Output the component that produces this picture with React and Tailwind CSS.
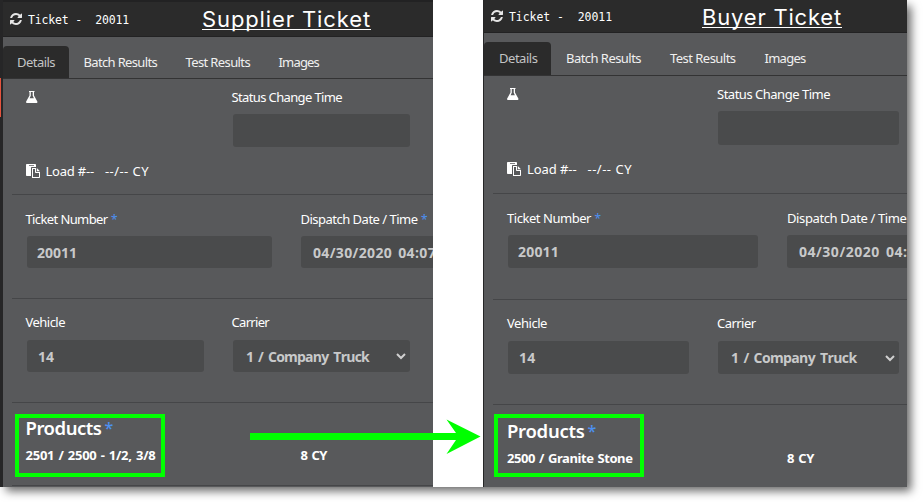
import { useLayoutEffect, useRef } from "react";

// Text tracked so that it fills the given width in pixels.
function Fit({ w, className = "", children }) {
  const ref = useRef(null);
  useLayoutEffect(() => {
    const el = ref.current;
    el.style.letterSpacing = "0px";
    const natural = el.getBoundingClientRect().width;
    el.style.letterSpacing = `${(w - natural) / el.textContent.length}px`;
  }, [w, children]);
  return (
    <span ref={ref} className={`inline-block shrink-0 whitespace-pre ${className}`}>
      {children}
    </span>
  );
}

function RefreshIcon() {
  return (
    <svg viewBox="0 0 1536 1536" className="size-3 shrink-0 fill-[#e6e6e6]">
      <path d="M1511 928q0 5-1 7-64 268-268 434.5t-478 166.5q-146 0-282.5-55t-243.5-157l-129 129q-19 19-45 19t-45-19-19-45v-448q0-26 19-45t45-19h448q26 0 45 19t19 45-19 45l-137 137q71 66 161 102t187 36q134 0 250-65t186-179q11-17 53-117 8-23 30-23h192q13 0 22.5 9.5t9.5 22.5zm25-800v448q0 26-19 45t-45 19h-448q-26 0-45-19t-19-45 19-45l138-138q-148-137-349-137-134 0-250 65t-186 179q-11 17-53 117-8 23-30 23h-199q-13 0-22.5-9.5t-9.5-22.5v-7q65-268 270-434.5t480-166.5q146 0 284 55.5t245 156.5l130-129q19-19 45-19t45 19 19 45z" />
    </svg>
  );
}

function FlaskIcon() {
  return (
    <svg viewBox="0 0 12 12" className="size-3 shrink-0 fill-white">
      <path
        fillRule="evenodd"
        d="M3 0h5.500v1.100H8V4.500l3.200 5.700c.6 1 .1 1.800-1 1.800H1.300c-1.100 0-1.600-.8-1-1.800L3.500 4.500V1.100H3zM4.800 1.100V4.800L3.600 7.200h4.300L6.700 4.800V1.100z"
      />
    </svg>
  );
}

function PasteIcon() {
  return (
    <svg viewBox="0 0 14 14" className="size-3.5 shrink-0 fill-white">
      <path
        fillRule="evenodd"
        d="M.8 0h8.400c.5 0 .8.300.8.800V3H6c-.6 0-1 .4-1 1V12H.8c-.5 0-.8-.3-.8-.8V.8C0 .3.300 0 .8 0zM3 1v.8h5V1zM6 4H10v3.600c0 .3.200.4.400.4H14v5c0 .6-.4 1-1 1H6zM7 5V13h6V9h-3.200c-.5 0-.8-.3-.8-.8V5zM10.800 4L14 7.200h-3.200z"
      />
    </svg>
  );
}

function Chevron() {
  return (
    <svg viewBox="0 0 10 7" className="h-[7px] w-2.5 shrink-0">
      <path d="M1 1l4 4 4-4" fill="none" stroke="#d0d0d0" strokeWidth="2" />
    </svg>
  );
}

function Star({ className = "text-[12px]" }) {
  return <span className={`text-[#4d90f0] ${className}`}>*</span>;
}

const INPUT =
  "flex items-center rounded-[3px] bg-[#4a4b4c] pt-px font-bold text-[14px] text-[#c8c9ca] [word-spacing:2px] font-['Open_Sans','Noto_Sans',sans-serif]";

function Panel({ p }) {
  return (
    <section className={`flex h-[487px] flex-col overflow-hidden bg-[#58595b] ${p.frame}`}>
      <header
        className={`flex shrink-0 items-center border-b border-[#222223] bg-[#2b2b2b] text-white ${p.header}`}
      >
        <RefreshIcon />
        <Fit w={p.w.ticket} className="ml-[6px] pt-[3px] font-['DejaVu_Sans_Mono',monospace] text-[11.5px]">
          {"Ticket -  20011"}
        </Fit>
        <h1 className={`border-b border-white font-['Inter',sans-serif] text-[22px] leading-[20px] ${p.title}`}>
          <Fit w={p.w.title}>{p.name}</Fit>
        </h1>
      </header>

      <nav className={`flex shrink-0 items-end border-b border-[#333334] text-white ${p.tabs}`}>
        <div className={`flex items-center rounded-t bg-[#2b2b2b] text-[#c3c4c5] ${p.active}`}>
          <Fit w={p.w.details}>Details</Fit>
        </div>
        <div className={`flex items-center text-[#f0f0f0] ${p.links}`}>
          <Fit w={p.w.batch}>Batch Results</Fit>
          <Fit w={p.w.test}>Test Results</Fit>
          <Fit w={p.w.images}>Images</Fit>
        </div>
      </nav>

      <div className="flex min-h-0 flex-1 flex-col pl-[9px] leading-5 text-white">
        <div className={`shrink-0 border-b border-[#454648] pt-2 ${p.inset} ${p.s1}`}>
          <div className="flex">
            <div className={`shrink-0 pt-1 ${p.colA}`}>
              <FlaskIcon />
            </div>
            <div className="shrink-0">
              <Fit w={p.w.status} className="block">Status Change Time</Fit>
              <div className={`mt-[7px] ${p.nudge} ${p.field} ${p.tall} ${INPUT}`} />
            </div>
          </div>
          <div className={`flex items-center ${p.load}`}>
            <PasteIcon />
            <Fit w={p.w.load} className="ml-[6px]">Load #--</Fit>
            <Fit w={p.w.cy} className="ml-[11px]">--/-- CY</Fit>
          </div>
        </div>

        <div className={`flex shrink-0 border-b border-[#454648] pt-[14px] ${p.inset} ${p.s2}`}>
          <div className={`shrink-0 ${p.colB}`}>
            <div className="h-5">
              <Fit w={p.w.number}>Ticket Number</Fit> <Star />
            </div>
            <div className={`mt-[7px] pl-2.5 ${p.nudge} ${p.wide} ${p.short} ${INPUT}`}>
              <Fit w={p.w.n20011}>20011</Fit>
            </div>
          </div>
          <div className="shrink-0">
            <div className="h-5 whitespace-nowrap">
              <Fit w={p.w.dispatch}>Dispatch Date / Time</Fit> <Star />
            </div>
            <div className={`mt-[7px] w-[245px] pl-3 ${p.dateNudge} ${p.short} ${INPUT}`}>
              <Fit w={p.w.date}>04/30/2020 04:07</Fit>
            </div>
          </div>
        </div>

        <div className={`flex shrink-0 border-b border-[#454648] pt-[13px] ${p.inset} ${p.s3}`}>
          <div className={`shrink-0 ${p.colA}`}>
            <Fit w={p.w.vehicle}>Vehicle</Fit>
            <div className={`mt-2 pl-[11px] ${p.nudge} ${p.field} ${p.short} ${INPUT}`}>
              <Fit w={p.w.n14}>14</Fit>
            </div>
          </div>
          <div className="shrink-0">
            <Fit w={p.w.carrier}>Carrier</Fit>
            <div className={`mt-2 justify-between pr-1 pl-[13px] ${p.nudge} ${p.field} ${p.short} ${INPUT}`}>
              <Fit w={p.w.company}>1 / Company Truck</Fit>
              <Chevron />
            </div>
          </div>
        </div>

        <div className={`relative shrink-0 ${p.inset} ${p.s4}`}>
          <div className={`absolute h-[63px] w-[150px] border-4 border-[#00ff00] ${p.box}`} />
          <h2 className="flex text-[18.5px] leading-[30px] font-semibold">
            <Fit w={p.w.products}>Products</Fit>
            <Star className="ml-[3px] text-[16px] font-medium" />
          </h2>
          <div className={`flex font-bold [word-spacing:1px] ${p.product}`}>
            <div className={`shrink-0 ${p.colB}`}>
              <Fit w={p.w.product}>{p.item}</Fit>
            </div>
            <Fit w={p.w.qty}>8 CY</Fit>
          </div>
        </div>
      </div>
    </section>
  );
}

const supplier = {
  name: "Supplier Ticket",
  item: "2501 / 2500 - 1/2, 3/8",
  frame: "w-[433px] border-l-[3px] border-[#262627]",
  header: "h-[37px] border-t-2 pl-[7px]",
  title: "ml-[73px] mt-px",
  tabs: "h-[42px]",
  active: "h-8 w-[66px] pt-px pl-[14px]",
  links: "h-8 gap-[28.5px] pt-px pl-[14.5px]",
  inset: "pl-[13.5px]",
  nudge: "ml-[1.5px]",
  dateNudge: "ml-[0.5px]",
  s1: "h-[116px]",
  s2: "h-[104px]",
  s3: "h-[104px]",
  s4: "h-[83px] border-b border-[#454648] pt-[10px]",
  colA: "w-[206px]",
  colB: "w-[275px]",
  field: "w-[177px]",
  wide: "w-[245px]",
  tall: "h-[33px]",
  short: "h-8",
  load: "mt-[14px]",
  product: "mt-[2px]",
  box: "top-[11px] left-[3px]",
  w: {
    ticket: 101, title: 169, details: 38, batch: 73.5, test: 64.5, images: 40.5,
    status: 110.5, load: 48.5, cy: 44, number: 82, n20011: 40, dispatch: 117,
    date: 123, vehicle: 39.5, n14: 16, carrier: 37.5, company: 123,
    products: 76, product: 130, qty: 26.5,
  },
};

const buyer = {
  name: "Buyer Ticket",
  item: "2500 / Granite Stone",
  frame: "w-[424px] border-l border-[#262627]",
  header: "h-[33px] pl-[7px]",
  title: "ml-[90px] mt-[3px]",
  tabs: "h-[43px]",
  active: "h-[33px] w-[67px] pl-[15px]",
  links: "h-[33px] gap-[29px] pl-[15px]",
  inset: "pl-[14px]",
  nudge: "ml-px",
  dateNudge: "ml-0",
  s1: "h-[118px]",
  s2: "h-[106px]",
  s3: "h-[105px]",
  s4: "h-[82px] pt-[11px]",
  colA: "w-[210px]",
  colB: "w-[280px]",
  field: "w-[181px]",
  wide: "w-[250px]",
  tall: "h-[34px]",
  short: "h-[33px]",
  load: "mt-[14px]",
  product: "mt-[2px]",
  box: "top-[9px] left-[1px]",
  w: {
    ticket: 103, title: 140, details: 38.5, batch: 75, test: 65.5, images: 41,
    status: 113, load: 49.5, cy: 44.500, number: 84, n20011: 41, dispatch: 119.5,
    date: 125.5, vehicle: 40, n14: 16.5, carrier: 38.5, company: 125.5,
    products: 77.5, product: 125.5, qty: 27,
  },
};

export default function App() {
  return (
    <main className="h-[502px] w-[923px] overflow-hidden bg-white font-['Noto_Sans','Open_Sans',sans-serif] text-[13px]">
      <div className="relative flex h-[487px] w-[907px] justify-between bg-white shadow-[5px_5px_9px_-1px_rgba(0,0,0,0.6)]">
        <Panel p={supplier} />
        <Panel p={buyer} />
        <div className="absolute top-[78px] left-0 h-[39px] w-px bg-[#e5533d]" />
        <svg viewBox="0 0 231 35" className="absolute top-[419px] left-[250px] h-[35px] w-[231px]">
          <path d="M0 14h206L196.500.5 230.500 17.500 196.500 35 206 21H0z" fill="#00ff00" />
        </svg>
      </div>
    </main>
  );
}
